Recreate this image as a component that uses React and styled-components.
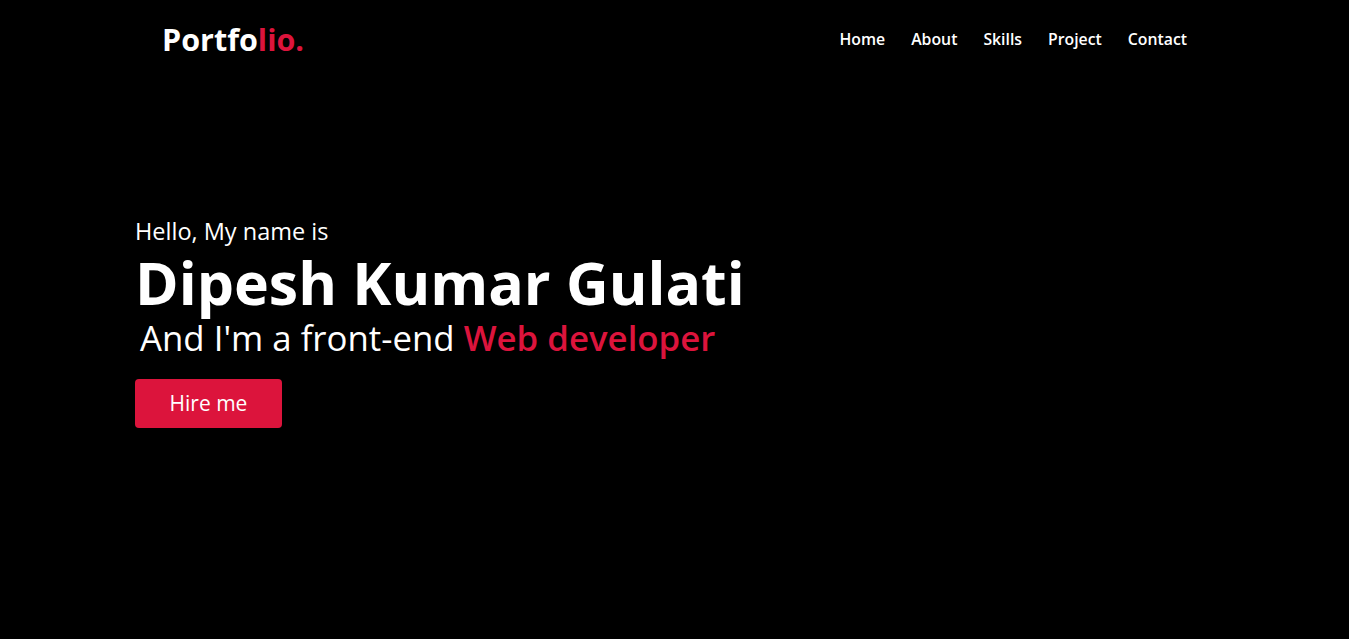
import React from 'react';
import styled, { createGlobalStyle } from 'styled-components';

const GlobalStyle = createGlobalStyle`
  * {
    margin: 0;
    padding: 0;
    box-sizing: border-box;
  }
  body {
    background: #000;
    color: #fff;
    font-family: "Open Sans", "Noto Sans", sans-serif;
  }
`;

const Navbar = styled.nav`
  height: 78px;
  display: flex;
  align-items: center;
  justify-content: space-between;
  padding: 0 162px;
`;

const Logo = styled.a`
  font-size: 30.5px;
  font-weight: 700;
  color: #fff;
  text-decoration: none;
  span {
    color: crimson;
  }
`;

const Menu = styled.ul`
  display: flex;
  list-style: none;
  gap: 26px;
`;

const MenuLink = styled.a`
  color: #fff;
  font-size: 15.8px;
  font-weight: 600;
  text-decoration: none;
`;

const Hero = styled.section`
  padding: 138px 135px 0;
  height: 561px;
`;

const Greeting = styled.div`
  font-size: 23.5px;
  line-height: 30px;
`;

const Name = styled.h1`
  font-size: 59px;
  font-weight: 700;
  line-height: 72px;
`;

const Role = styled.div`
  font-size: 34.8px;
  line-height: 40px;
  margin-left: 5px;
  span {
    color: crimson;
    font-weight: 600;
  }
`;

const HireButton = styled.a`
  display: inline-block;
  margin-top: 21px;
  width: 147px;
  height: 49px;
  line-height: 49px;
  text-align: center;
  background: crimson;
  color: #fff;
  font-size: 21px;
  border-radius: 4px;
  text-decoration: none;
`;

const links = ['Home', 'About', 'Skills', 'Project', 'Contact'];

const App = () => {
  return (
    <>
      <GlobalStyle />
      <Navbar>
        <Logo href="#">Portfo<span>lio.</span></Logo>
        <Menu>
          {links.map((l) => (
            <li key={l}>
              <MenuLink href="#">{l}</MenuLink>
            </li>
          ))}
        </Menu>
      </Navbar>
      <Hero>
        <Greeting>Hello, My name is</Greeting>
        <Name>Dipesh Kumar Gulati</Name>
        <Role>And I'm a front-end <span>Web developer</span></Role>
        <HireButton href="#">Hire me</HireButton>
      </Hero>
    </>
  );
};

export default App;
